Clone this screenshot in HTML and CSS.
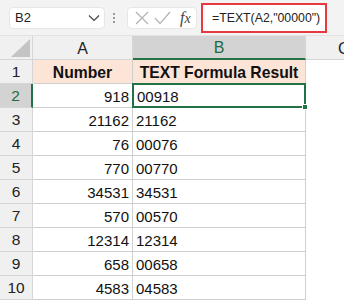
FILE: index.html
```html
<!DOCTYPE html>
<html>
<head>
<meta charset="utf-8">
<link rel="stylesheet" href="styles.css">
</head>
<body>
<div class="topbar">
  <div class="namebox"><span>B2</span>
    <svg class="chev" width="12" height="8" viewBox="0 0 12 8"><path d="M1 1.5 L6 6.5 L11 1.5" fill="none" stroke="#444" stroke-width="1.2"/></svg>
  </div>
  <div class="dots"><i></i><i></i><i></i></div>
  <div class="fxbox">
    <svg width="14" height="14" viewBox="0 0 14 14"><path d="M1 1 L13 13 M13 1 L1 13" stroke="#b4b4b4" stroke-width="1.2" fill="none"/></svg>
    <svg width="17" height="14" viewBox="0 0 17 14"><path d="M1 7 L6 12.5 L16 1" stroke="#b4b4b4" stroke-width="1.2" fill="none"/></svg>
    <span class="fx">f<span class="x">x</span></span>
  </div>
  <div class="formula">=TEXT(A2,"00000")</div>
</div>
<div class="sheet">
  <div class="corner"><svg width="19" height="18" viewBox="0 0 19 18"><path d="M19 0 L19 18 L0 18 Z" fill="#c4c4c4"/></svg></div>
  <div class="colh">A</div>
  <div class="colh sel">B</div>
  <div class="colh last"><span>C</span></div>

  <div class="rowh">1</div><div class="c hd">Number</div><div class="c hd">TEXT Formula Result</div><div class="blank"></div>
  <div class="rowh sel">2</div><div class="c n">918</div><div class="c t active">00918<span class="handle"></span></div><div class="blank"></div>
  <div class="rowh">3</div><div class="c n">21162</div><div class="c t">21162</div><div class="blank"></div>
  <div class="rowh">4</div><div class="c n">76</div><div class="c t">00076</div><div class="blank"></div>
  <div class="rowh">5</div><div class="c n">770</div><div class="c t">00770</div><div class="blank"></div>
  <div class="rowh">6</div><div class="c n">34531</div><div class="c t">34531</div><div class="blank"></div>
  <div class="rowh">7</div><div class="c n">570</div><div class="c t">00570</div><div class="blank"></div>
  <div class="rowh">8</div><div class="c n">12314</div><div class="c t">12314</div><div class="blank"></div>
  <div class="rowh">9</div><div class="c n">658</div><div class="c t">00658</div><div class="blank"></div>
  <div class="rowh">10</div><div class="c n">4583</div><div class="c t">04583</div><div class="blank"></div>
</div>
</body>
</html>
```
FILE: styles.css
```css
* { box-sizing: border-box; }
html, body { margin: 0; padding: 0; background: #fff; }
body { width: 344px; height: 300px; overflow: hidden; font-family: "Liberation Sans", Arial, sans-serif; color: #222; }

.topbar {
  height: 36px;
  background: #f3f3f3;
  border-bottom: 1px solid #e2e2e2;
  display: flex;
  align-items: center;
  padding-left: 9px;
}
.namebox {
  width: 96px; height: 22px;
  background: #fff;
  border: 1px solid #e6e6e6;
  border-radius: 4px;
  display: flex; align-items: center; justify-content: space-between;
  padding: 0 4px 0 5px;
  font-size: 13px; color: #222;
}
.chev { margin-top: 1px; }
.dots { width: 22px; display: flex; flex-direction: column; align-items: center; gap: 2px; margin-left: -2px; margin-right: 2px; }
.dots i { display: block; width: 2px; height: 2px; background: #999; }
.fxbox {
  width: 70px; height: 22px;
  background: #fff;
  border: 1px solid #e6e6e6;
  border-radius: 4px;
  display: flex; align-items: center;
  padding: 0 0 0 7px; gap: 5px;
}
.fx { font-family: "Liberation Serif", serif; font-style: italic; font-size: 16px; color: #444; margin-left: 4px; }
.fx .x { font-size: 14px; }
.formula {
  margin-left: 4px;
  width: 126px; height: 30px;
  border: 2px solid #e8393e;
  background: #fff;
  display: flex; align-items: center;
  padding-left: 9px;
  font-size: 12.3px; color: #222;
}

.sheet {
  display: grid;
  grid-template-columns: 33px 100px 173px 1fr;
  grid-template-rows: 24px repeat(10, 24px);
}
.corner {
  background: #f0f0f0;
  border-right: 1px solid #d6d6d6;
  border-bottom: 1px solid #d6d6d6;
  display: flex; align-items: flex-end; justify-content: flex-end;
  padding: 0 2px 2px 0;
}
.colh {
  background: #f0f0f0;
  border-right: 1px solid #d6d6d6;
  border-bottom: 1px solid #d6d6d6;
  display: flex; align-items: center; justify-content: center;
  font-size: 16px; color: #222;
  padding-top: 2px;
}
.colh.sel { background: #d3d3d3; color: #1e6b41; border-bottom: 2px solid #217346; }
.colh.last { justify-content: flex-start; padding-left: 32px; border-right: 0; overflow: hidden; }
.rowh {
  background: #f0f0f0;
  border-right: 1px solid #d6d6d6;
  border-bottom: 1px solid #d6d6d6;
  display: flex; align-items: center; justify-content: center;
  font-size: 15.5px; color: #222;
  padding-top: 1px;
}
.rowh.sel { background: #d3d3d3; color: #1e6b41; border-right: 2px solid #217346; }
.c {
  border-right: 1px solid #d0d0d0;
  border-bottom: 1px solid #d0d0d0;
  display: flex; align-items: center;
  font-size: 15px; color: #111;
  padding-top: 2px;
  white-space: nowrap;
}
.c.hd { background: #fce4d6; justify-content: center; font-weight: bold; font-size: 15.7px; }
.c.n { justify-content: flex-end; padding-right: 3px; }
.c.t { padding-left: 3px; }
.c.active { position: relative; border: 2px solid #217346; margin: -1px 0 0 -1px; }
.handle { position: absolute; right: -4px; bottom: -4px; width: 6px; height: 6px; background: #217346; border: 1px solid #fff; }
.blank { background: #fff; }
```
